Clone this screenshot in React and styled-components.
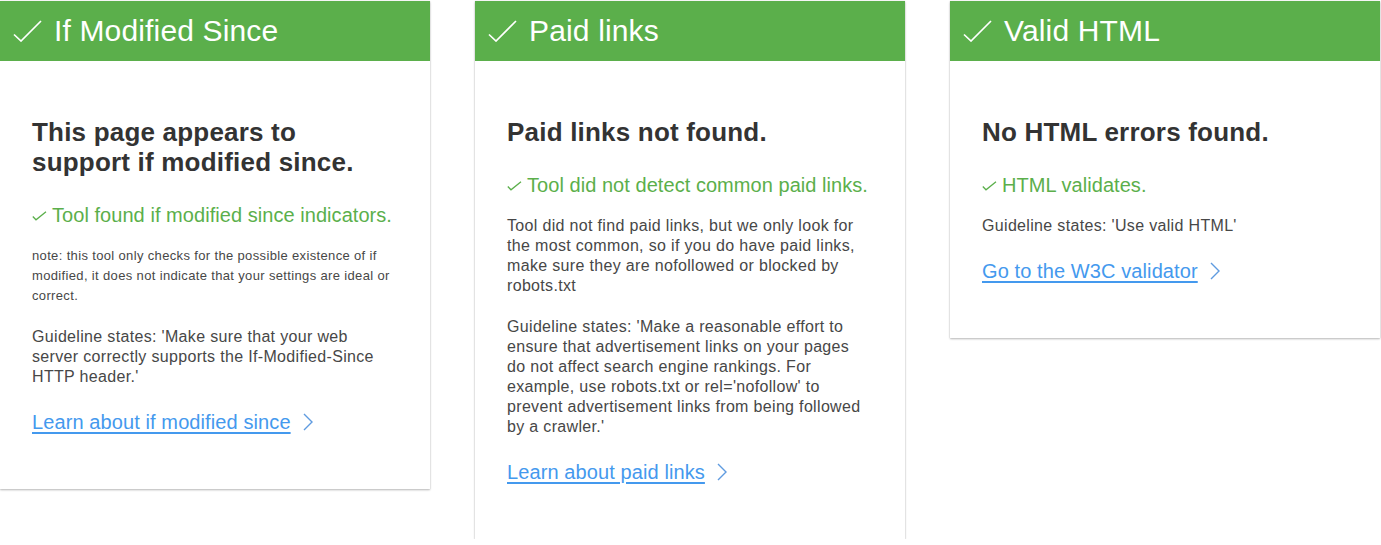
import React from 'react';
import styled, { createGlobalStyle } from 'styled-components';

const GlobalStyle = createGlobalStyle`
  html, body {
    margin: 0;
    padding: 0;
    background: #ffffff;
  }
  body {
    font-family: "Liberation Sans", Arial, Helvetica, sans-serif;
    -webkit-font-smoothing: antialiased;
  }
  * {
    box-sizing: border-box;
  }
`;

const Page = styled.div`
  display: grid;
  grid-template-columns: repeat(3, 430px);
  column-gap: 45px;
  align-items: start;
  padding-top: 1px;
`;

const Card = styled.section`
  background: #ffffff;
  box-shadow: 0 1px 2px rgba(0, 0, 0, 0.28), 0 0 1px rgba(0, 0, 0, 0.12);
`;

const Header = styled.header`
  height: 60px;
  background: #5baf4b;
  display: flex;
  align-items: center;
  padding-left: 13px;
  gap: 11px;
  color: #ffffff;
`;

const HeaderTitle = styled.h2`
  margin: 0;
  font-size: 30px;
  font-weight: 400;
  line-height: 34px;
  letter-spacing: 0.15px;
`;

const Body = styled.div`
  padding: 56px 33px 55px 32px;
`;

const Heading = styled.h3`
  margin: 0 0 26px;
  font-size: 26px;
  font-weight: 700;
  line-height: 30px;
  letter-spacing: 0.2px;
  color: #333333;
`;

const Status = styled.div`
  display: flex;
  align-items: center;
  margin-bottom: 19px;
  font-size: 20px;
  line-height: 24px;
  letter-spacing: 0.05px;
  white-space: nowrap;
  color: #5baf4b;

  svg {
    margin-right: 5px;
    margin-top: 1px;
    flex-shrink: 0;
  }
`;

const Text = styled.p`
  margin: 0 0 21px;
  font-size: ${(p) => (p.$small ? '13px' : '16px')};
  letter-spacing: ${(p) => (p.$small ? '0.35px' : '0.33px')};
  line-height: 20px;
  color: #474747;
`;

const LinkRow = styled.div`
  display: flex;
  align-items: center;
  margin-top: 23px;
  line-height: 24px;
`;

const LearnLink = styled.a`
  font-size: 20px;
  letter-spacing: 0.1px;
  color: #4499ee;
  text-decoration: underline;
  text-underline-offset: 3px;
  text-decoration-thickness: 2px;
  cursor: pointer;
`;

const Chevron = styled.svg`
  margin-left: 12px;
  flex-shrink: 0;
`;

const BigCheck = () => (
  <svg width="30" height="22" viewBox="0 0 30 22" fill="none">
    <path d="M1 14.5 L8 21 L28 1" stroke="#ffffff" strokeWidth="1.7" />
  </svg>
);

const SmallCheck = () => (
  <svg width="15" height="10" viewBox="0 0 15 10" fill="none">
    <path d="M0.8 5.5 L4 8.8 L14 0.8" stroke="#5baf4b" strokeWidth="1.3" />
  </svg>
);

const Arrow = () => (
  <Chevron width="10" height="18" viewBox="0 0 10 18" fill="none">
    <path d="M1 1 L9 9 L1 17" stroke="#5f9be0" strokeWidth="1.4" />
  </Chevron>
);

const cards = [
  {
    title: 'If Modified Since',
    heading: 'This page appears to support if modified since.',
    status: 'Tool found if modified since indicators.',
    paragraphs: [
      {
        small: true,
        text: 'note: this tool only checks for the possible existence of if modified, it does not indicate that your settings are ideal or correct.',
      },
      {
        text: "Guideline states: 'Make sure that your web server correctly supports the If-Modified-Since HTTP header.'",
      },
    ],
    link: 'Learn about if modified since',
  },
  {
    title: 'Paid links',
    heading: 'Paid links not found.',
    status: 'Tool did not detect common paid links.',
    paragraphs: [
      {
        text: 'Tool did not find paid links, but we only look for the most common, so if you do have paid links, make sure they are nofollowed or blocked by robots.txt',
      },
      {
        text: "Guideline states: 'Make a reasonable effort to ensure that advertisement links on your pages do not affect search engine rankings. For example, use robots.txt or rel='nofollow' to prevent advertisement links from being followed by a crawler.'",
      },
    ],
    link: 'Learn about paid links',
  },
  {
    title: 'Valid HTML',
    heading: 'No HTML errors found.',
    status: 'HTML validates.',
    paragraphs: [{ text: "Guideline states: 'Use valid HTML'" }],
    link: 'Go to the W3C validator',
  },
];

function ResultCard({ card }) {
  return (
    <Card>
      <Header>
        <BigCheck />
        <HeaderTitle>{card.title}</HeaderTitle>
      </Header>
      <Body>
        <Heading>{card.heading}</Heading>
        <Status>
          <SmallCheck />
          {card.status}
        </Status>
        {card.paragraphs.map((p, i) => (
          <Text key={i} $small={p.small}>
            {p.text}
          </Text>
        ))}
        <LinkRow>
          <LearnLink>{card.link}</LearnLink>
          <Arrow />
        </LinkRow>
      </Body>
    </Card>
  );
}

export default function App() {
  return (
    <>
      <GlobalStyle />
      <Page>
        {cards.map((c) => (
          <ResultCard key={c.title} card={c} />
        ))}
      </Page>
    </>
  );
}
